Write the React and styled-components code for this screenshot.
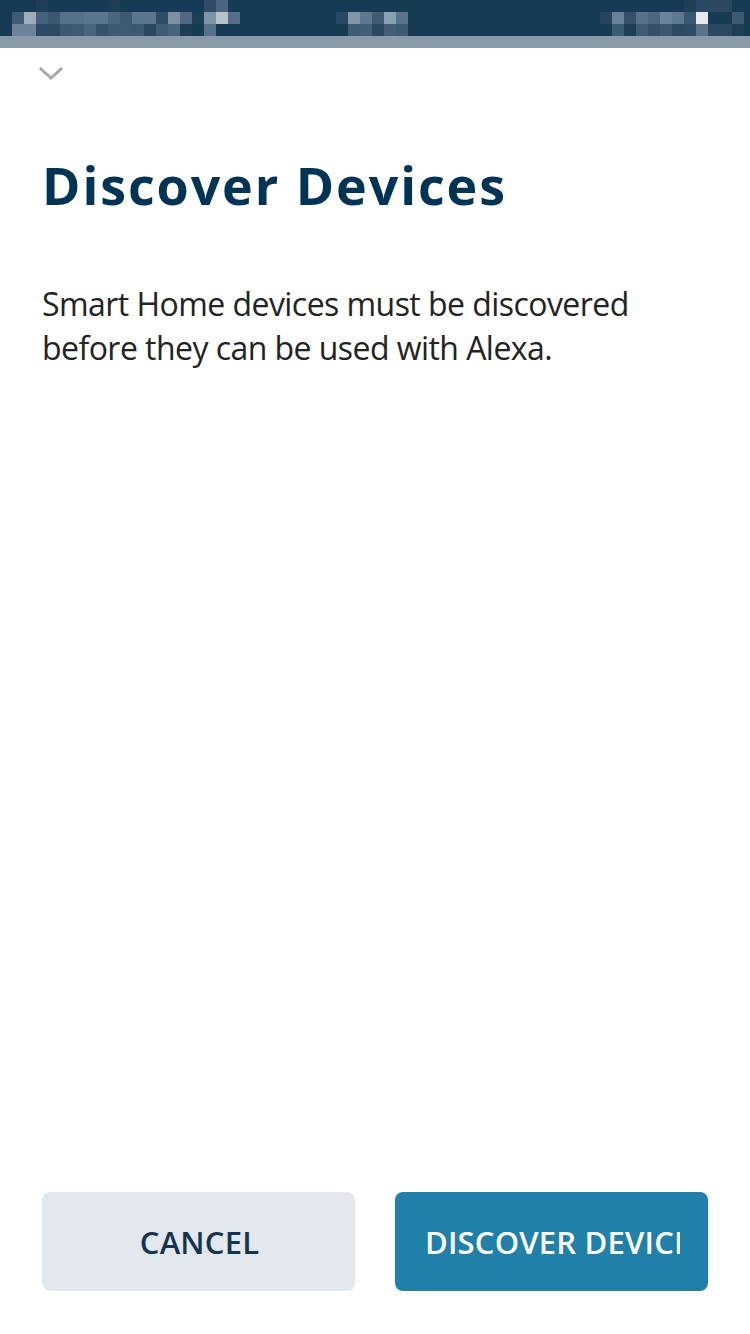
import React from "react";
import styled, { createGlobalStyle } from "styled-components";

const GlobalStyle = createGlobalStyle`
  html, body { margin: 0; padding: 0; background: #ffffff; }
  body { font-family: "Open Sans", "Noto Sans", sans-serif; -webkit-font-smoothing: antialiased; }
  * { box-sizing: border-box; }
`;

const Page = styled.div`
  display: flex;
  flex-direction: column;
  min-height: 100vh;
  width: 750px;
  background: #ffffff;
`;

const StatusBar = styled.div`
  height: 36px;
  background: #173a55;
  flex: none;
  & > svg { display: block; }
`;

const Backdrop = styled.div`
  height: 12px;
  background: #8b9aa8;
  flex: none;
`;

const Sheet = styled.section`
  flex: 1;
  display: flex;
  flex-direction: column;
  padding: 0 42px 43px 42px;
`;

const Handle = styled.button`
  align-self: flex-start;
  margin: 19px 0 0 -3px;
  padding: 0;
  border: 0;
  background: none;
  height: 13px;
  & > svg { display: block; }
`;

const Title = styled.h1`
  margin: 74px 0 0 0;
  font-family: "Open Sans", "Noto Sans", sans-serif;
  font-weight: 700;
  font-size: 52px;
  line-height: 1.2;
  color: #003354;
  letter-spacing: 1.9px;
`;

const Body = styled.p`
  margin: 66px 0 0 0;
  font-family: "Open Sans", "Noto Sans", sans-serif;
  font-weight: 400;
  font-size: 32px;
  line-height: 44px;
  color: #232323;
  letter-spacing: -0.55px;
`;

const Actions = styled.div`
  margin-top: auto;
  display: grid;
  grid-template-columns: 313px 313px;
  column-gap: 40px;
`;

const Button = styled.button`
  height: 99px;
  border: 0;
  border-radius: 8px;
  padding: 0 28px 0 30px;
  background: ${(p) => (p.$primary ? "#2080aa" : "#e3e8ef")};
  color: ${(p) => (p.$primary ? "#ffffff" : "#15354f")};
  font-family: "Open Sans", "Noto Sans", sans-serif;
  font-weight: 600;
  font-size: 31px;
  letter-spacing: 0.2px;
  text-align: center;
  min-width: 0;
`;

const Label = styled.span`
  display: block;
  overflow: hidden;
  white-space: nowrap;
  text-align: center;
`;

const blocks = [
  // [col, row, color]
  [3, 0, "#1f3e58"], [9, 0, "#1e3d57"], [17, 0, "#2f4d66"], [18, 0, "#4a6680"],
  [1, 1, "#3f5c76"], [2, 1, "#9eadbb"], [3, 1, "#466279"], [4, 1, "#3b5872"],
  [5, 1, "#56718a"], [6, 1, "#56718a"], [7, 1, "#5b758d"], [8, 1, "#5b758d"],
  [9, 1, "#4a6680"], [10, 1, "#3d5a74"], [11, 1, "#5c768e"], [12, 1, "#5c768e"],
  [13, 1, "#2f4d66"], [14, 1, "#7b90a3"], [15, 1, "#4f6a82"], [16, 1, "#1e3d57"],
  [17, 1, "#7e93a6"], [18, 1, "#b7c2cc"], [19, 1, "#536e86"],
  [1, 2, "#6c839a"], [2, 2, "#6c839a"], [3, 2, "#2c4a64"], [4, 2, "#2c4a64"],
  [5, 2, "#3c5972"], [6, 2, "#3f5b74"], [7, 2, "#4a657e"], [8, 2, "#35536c"],
  [9, 2, "#3d5a73"], [10, 2, "#3e5b74"], [11, 2, "#3d5973"], [12, 2, "#284760"],
  [13, 2, "#3f5c74"], [14, 2, "#48647c"], [15, 2, "#1d3c56"], [17, 2, "#56718a"],
  [28, 1, "#2a4862"], [29, 1, "#8196a9"], [30, 1, "#5d778e"], [31, 1, "#3f5c74"],
  [32, 1, "#8aa0b0"], [33, 1, "#5a748c"],
  [29, 2, "#3f5b74"], [30, 2, "#425f77"], [31, 2, "#2a4862"], [32, 2, "#425f77"],
  [33, 2, "#3d5a73"],
  [57, 0, "#1f3e58"], [58, 0, "#2b4963"], [59, 0, "#2b4963"], [60, 0, "#2b4963"],
  [50, 1, "#27455f"], [51, 1, "#6a8299"], [52, 1, "#34526b"], [53, 1, "#58728a"],
  [54, 1, "#4c677f"], [55, 1, "#6c849a"], [56, 1, "#5f788f"], [57, 1, "#3c5871"],
  [58, 1, "#e6e9ed"], [61, 1, "#3d5a73"],
  [51, 2, "#3d5a73"], [52, 2, "#1e3d57"], [53, 2, "#3f5b74"], [54, 2, "#354f68"],
  [55, 2, "#3c5871"], [56, 2, "#2d4b64"], [57, 2, "#2e4c66"], [58, 2, "#5a748c"],
  [59, 2, "#2b4963"], [60, 2, "#2b4963"], [61, 2, "#1e3d57"],
];

function StatusPixels() {
  return (
    <svg width="750" height="36" viewBox="0 0 750 36" aria-hidden="true">
      {blocks.map(([c, r, fill], i) => (
        <rect key={i} x={c * 12} y={r * 12} width="12" height="12" fill={fill} />
      ))}
    </svg>
  );
}

function Chevron() {
  return (
    <svg width="24" height="13" viewBox="0 0 24 13" aria-hidden="true">
      <path d="M2 2 L12 11 L22 2" fill="none" stroke="#a9a9a9" strokeWidth="3" strokeLinecap="square" />
    </svg>
  );
}

export default function App() {
  return (
    <>
      <GlobalStyle />
      <Page>
        <StatusBar>
          <StatusPixels />
        </StatusBar>
        <Backdrop />
        <Sheet>
          <Handle aria-label="Close">
            <Chevron />
          </Handle>
          <Title>Discover Devices</Title>
          <Body>
            Smart Home devices must be discovered
            <br />
            before they can be used with Alexa.
          </Body>
          <Actions>
            <Button>
              <Label>CANCEL</Label>
            </Button>
            <Button $primary>
              <Label>DISCOVER DEVICES</Label>
            </Button>
          </Actions>
        </Sheet>
      </Page>
    </>
  );
}
